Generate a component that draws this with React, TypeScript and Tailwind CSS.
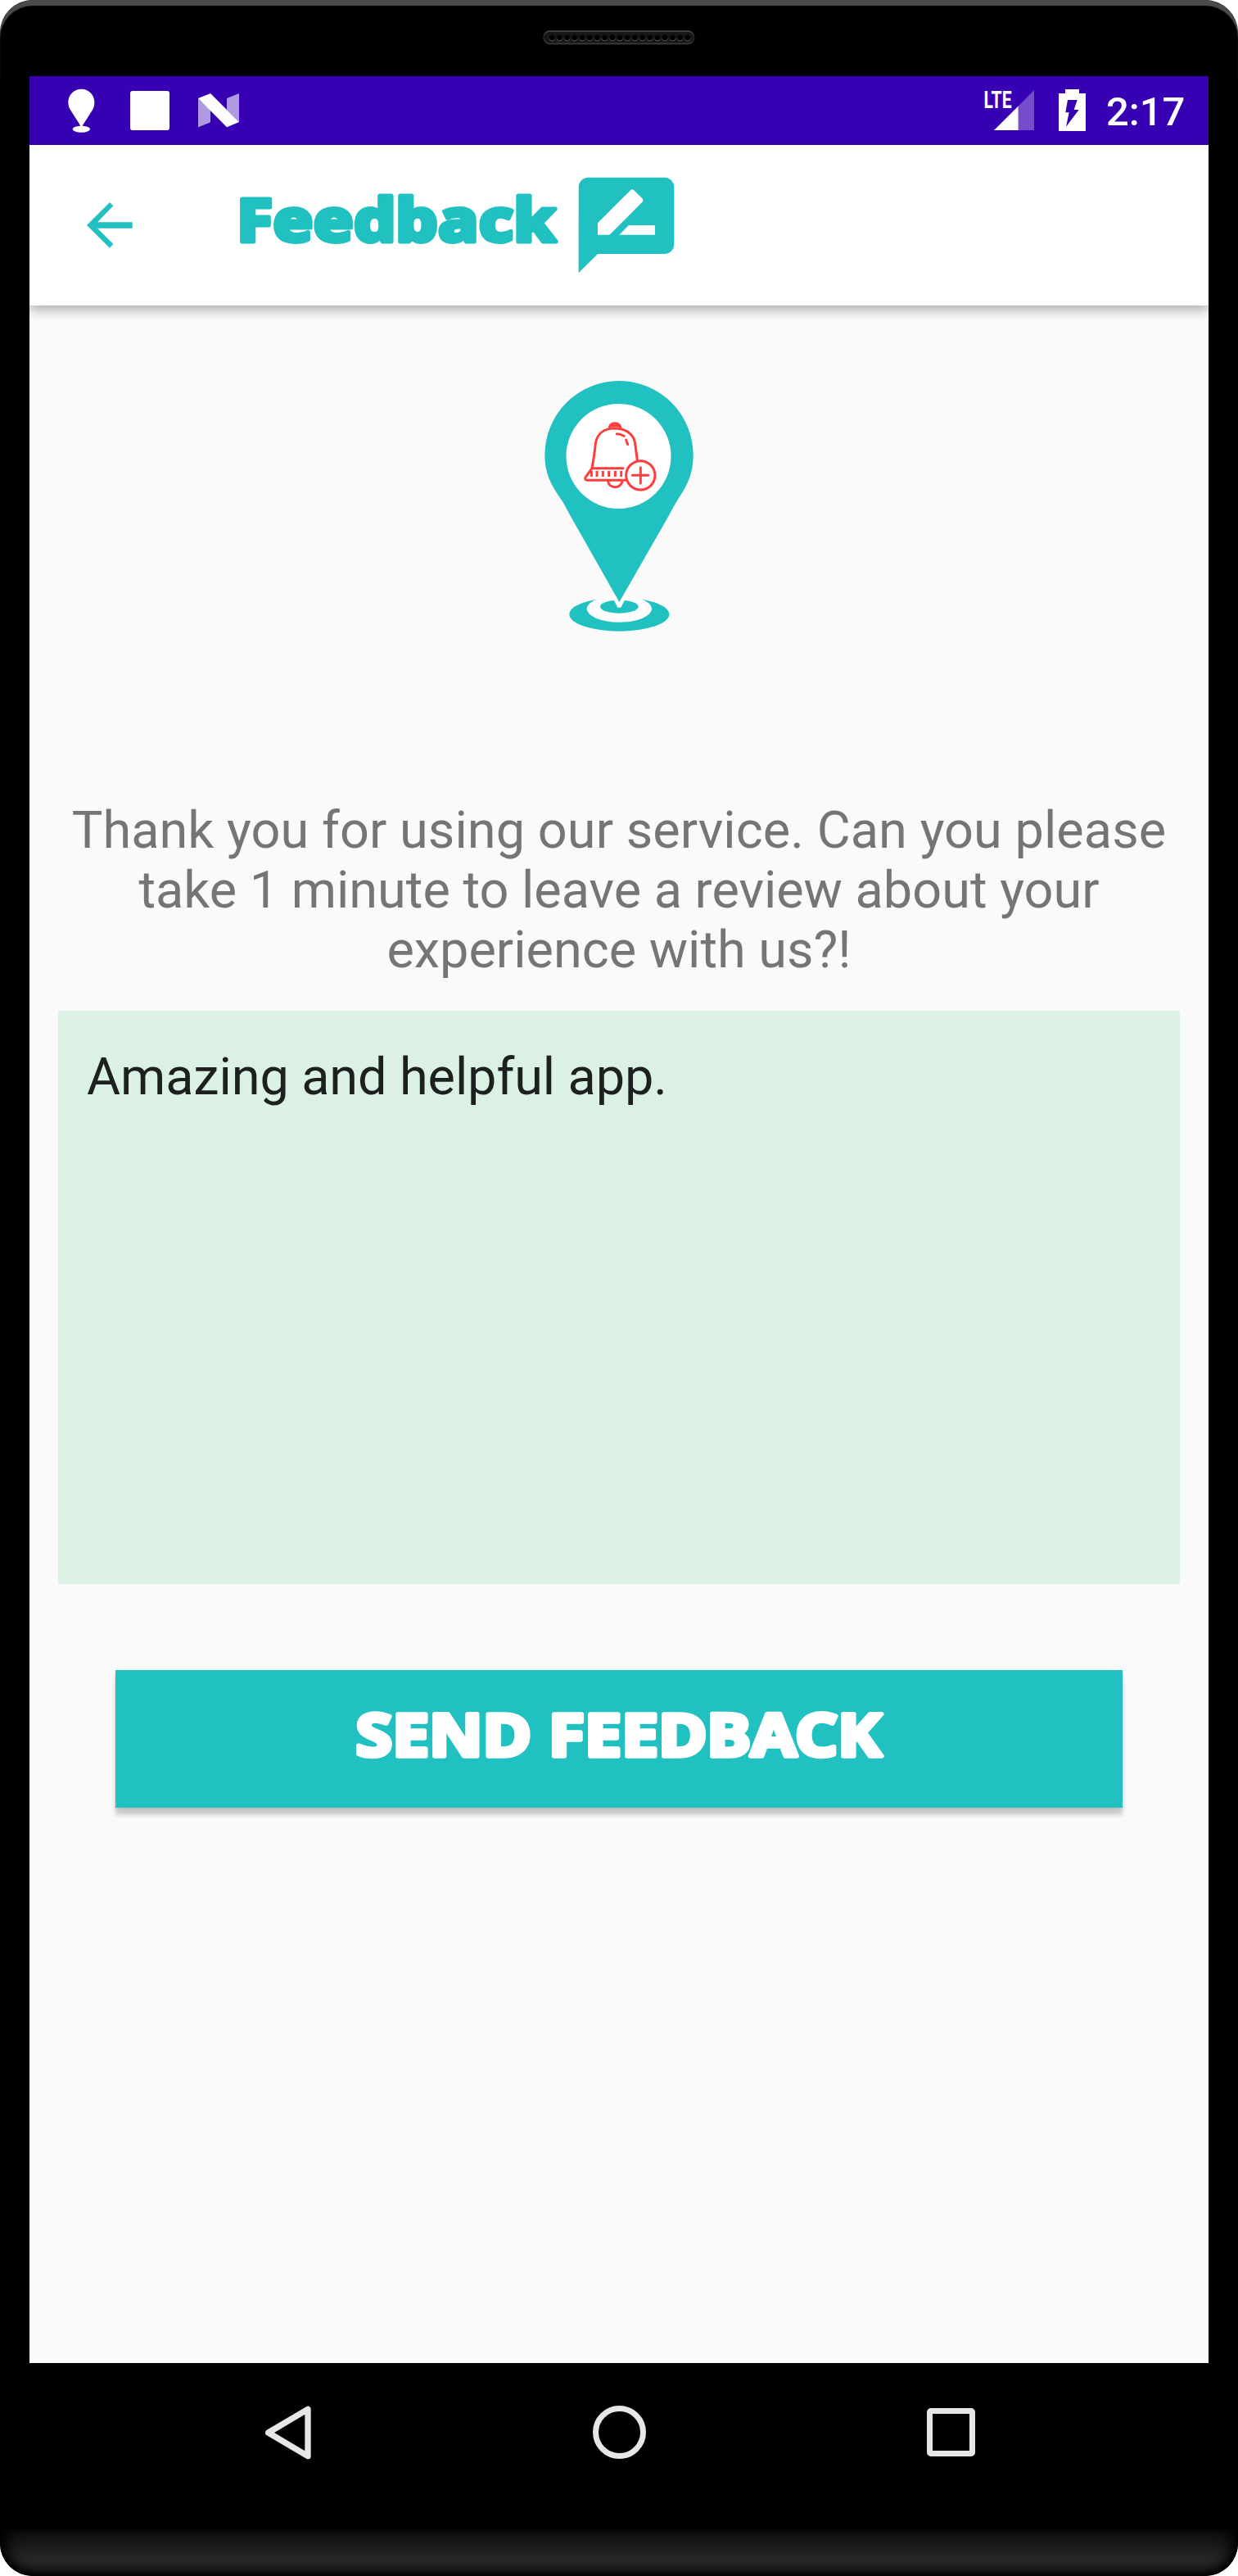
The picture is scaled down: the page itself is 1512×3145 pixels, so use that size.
import React from "react";

const TEAL = "#21c0c1";

function Speaker() {
  const holes = Array.from({ length: 19 }, (_, i) => 11.2 + i * 9.2);
  return (
    <svg width="186" height="18" viewBox="0 0 186 18" aria-hidden="true">
      <defs>
        <linearGradient id="rim" x1="0" y1="0" x2="0" y2="1">
          <stop offset="0" stopColor="#4c4c4c" />
          <stop offset="0.5" stopColor="#1c1c1c" />
          <stop offset="1" stopColor="#3c3c3c" />
        </linearGradient>
        <linearGradient id="hole" x1="0" y1="0" x2="0" y2="1">
          <stop offset="0.4" stopColor="#0c0c0c" />
          <stop offset="1" stopColor="#626262" />
        </linearGradient>
      </defs>
      <rect x="0.8" y="1" width="184" height="15.4" rx="7.7" fill="#171717" stroke="url(#rim)" strokeWidth="1.6" />
      {holes.map((x) => (
        <circle key={x} cx={x} cy="9.3" r="3.6" fill="#000" stroke="url(#hole)" strokeWidth="1" />
      ))}
    </svg>
  );
}

function StatusBar() {
  return (
    <div className="flex h-[84px] shrink-0 items-start justify-between bg-[#3700b3]">
      <div className="flex items-start">
        <svg className="ml-[46px] mt-[15px]" width="34" height="55" viewBox="246 324 102 165" fill="#fff">
          <path d="M298 326c-27 0-48 21-48 48 0 12 3 21 10 32l36 56-1 0h6l36-56c7-11 9-20 9-32 0-27-21-48-48-48Z" />
          <path d="M291 450h14l-5 14h-6z" />
          <ellipse cx="298" cy="473" rx="32" ry="12" />
        </svg>
        <div className="ml-[43px] mt-[18px] size-12 rounded-[3px] bg-white" />
        <svg className="ml-[35px] mt-[21px]" width="50" height="42" viewBox="726 343 150 126" fill="#fff">
          <path opacity="0.6" d="M726 361 771 404V449L726 467ZM831 361 876 343V448L831 403Z" />
          <path d="M726 361 771 343 876 448 831 467Z" />
        </svg>
      </div>
      <div className="flex items-start">
        <svg className="mt-[6px]" width="63" height="62" viewBox="0 -10 63 62" fill="#fff">
          <text
            x="0.500"
            y="23"
            textLength="34"
            lengthAdjust="spacingAndGlyphs"
            fontFamily="Roboto, sans-serif"
            fontWeight="700"
            fontSize="29.5"
          >
            LTE
          </text>
          <path opacity="0.3" d="M42.700 20.500 62 1V50H42.700Z" />
          <path d="M13 50 42.700 20.500V50Z" />
        </svg>
        <svg className="ml-[29px] mt-[16px]" width="33" height="51" viewBox="399 327 99 153">
          <path fill="#fff" d="M423 327h51v15h24v138h-99V342h24Z" />
          <path fill="#3700b3" d="M432 366h35l-12 36h18l-47 62 11-52h-13Z" />
        </svg>
        <span className="ml-[25px] mr-[27px] mt-[15px] block w-[98px] whitespace-nowrap font-['Roboto',sans-serif] text-[49px] font-medium leading-[57px] text-white">
          2:17
        </span>
      </div>
    </div>
  );
}

function AppBar() {
  return (
    <header className="relative flex h-[196px] shrink-0 items-start bg-white shadow-[0_5px_14px_rgba(0,0,0,0.33)]">
      <button type="button" aria-label="Back" className="ml-[70px] mt-[70px] h-14 w-14">
        <svg width="56" height="56" viewBox="319 741 168 168">
          <path fill={TEAL} d="M486 813.500H358L416 754 403 741 319 825 403 908 416 894 358 836H486Z" />
        </svg>
      </button>
      <h1 className="ml-[122px] mt-[28px]">
        <svg width="404" height="130" viewBox="0 0 404 130">
          <text
            x="5"
            y="89.500"
            textLength="390"
            lengthAdjust="spacingAndGlyphs"
            fontFamily="'Noto Sans', sans-serif"
            fontWeight="800"
            fontSize="74"
            fill={TEAL}
            stroke={TEAL}
            strokeWidth="5"
            strokeLinejoin="round"
          >
            Feedback
          </text>
        </svg>
      </h1>
      <svg className="ml-[7px] mt-[27.500px]" width="140" height="140" viewBox="0 0 24 24" fill={TEAL}>
        <path d="M20 2H4c-1.100 0-1.990.9-1.990 2L2 22l4-4h14c1.100 0 2-.9 2-2V4c0-1.100-.9-2-2-2zM6 14v-2.470l6.880-6.880c.2-.2.510-.2.710 0l1.770 1.770c.2.2.2.510 0 .710L8.470 14H6zm12 0h-7.500l2-2H18v2z" />
      </svg>
    </header>
  );
}

function PinLogo() {
  return (
    <svg className="mx-auto" width="184" height="308" viewBox="72 72 552 924">
      <ellipse cx="349" cy="930" rx="183" ry="62" fill={TEAL} />
      <path fill="#fafafa" d="M272 860H426L410 874H288Z" />
      <ellipse cx="349" cy="910" rx="119" ry="49" fill="#fdfdfd" />
      <ellipse cx="349" cy="902" rx="70" ry="24" fill={TEAL} />
      <path fill="#fdfdfd" d="M325 870 343 905H355L373 870Z" />
      <path
        fill={TEAL}
        d="M76 347A272 272 0 0 1 620 347C620 420 594 464 560 515 545 540 530 570 514 598L349 885 186 598C170 570 155 540 140 515 104 462 76 420 76 347Z"
      />
      <circle cx="346.500" cy="351" r="192" fill="#fff" />
      <g fill="none" stroke="#ff3d3d" strokeWidth="9" strokeLinecap="round">
        <path d="M313 249C314 235 322 230 333 230S352 235 354 249M322 240H345" />
        <path d="M249 392C257 355 260 325 262 305 267 267 294 249 333 249S403 270 407 305L415 366" />
        <path d="M249 395H363M247 398 225 429Q222 439 232 439H372" />
        <path d="M308 443C312 471 354 471 360 443" />
        <circle cx="427" cy="421" r="53" />
        <path d="M397 421H455M427 392V450" />
        <path d="M340 269Q354 269 366 277M374 291 380 308" />
        <path strokeLinecap="butt" d="M247 405V426M267 405V426M289 405V426M311 405V426M334 405V426M356 405V426" />
      </g>
    </svg>
  );
}

function NavBar() {
  return (
    <nav className="flex h-[168px] items-center bg-black">
      <svg className="ml-[322px] mt-[1px]" width="60" height="68" viewBox="966 287 180 204">
        <path
          fill="none"
          stroke="#e6e6e6"
          strokeWidth="22"
          strokeLinejoin="round"
          d="M1128 303V475L983 389Z"
        />
      </svg>
      <div className="ml-[342px] mt-[1px] size-[65px] rounded-full border-[7.500px] border-[#e6e6e6]" />
      <div className="ml-[343px] size-[59px] rounded-[5px] border-[7px] border-[#e6e6e6]" />
    </nav>
  );
}

export default function App() {
  return (
    <div className="w-[1512px] bg-white">
      <div className="flex h-[3145px] flex-col overflow-hidden rounded-[40px] bg-black">
        <div className="flex h-[93px] shrink-0 items-start justify-center rounded-t-[40px] pt-[37px] shadow-[inset_0_7px_1px_#4b4b4b]">
          <Speaker />
        </div>
        <div className="mx-[36px] flex h-[2792px] shrink-0 flex-col overflow-hidden bg-[#fafafa]">
          <StatusBar />
          <AppBar />
          <main className="flex flex-col pt-[91px]">
            <PinLogo />
            <p className="mt-[205px] text-center font-['Roboto',sans-serif] text-[63px] leading-[73px] text-[#757575]">
              <span className="tracking-[0.07px]">Thank you for using our service. Can you please</span>
              <br />
              take 1 minute to leave a review about your
              <br />
              experience with us?!
            </p>
            <div className="mx-[35px] mt-[38px] h-[700px] bg-[#daf1e4] px-[35px] pt-[44px] font-['Roboto',sans-serif] text-[63px] leading-[73px] tracking-[-0.1px] text-[#1e201f]">
              Amazing and helpful app.
            </div>
            <button
              type="button"
              className="mx-[105px] mt-[105px] flex h-[168px] items-center justify-center bg-[#21c0c1] shadow-[0_9px_5px_rgba(0,0,0,0.19),0_1px_3px_rgba(0,0,0,0.1)]"
            >
              <svg width="670" height="130" viewBox="0 0 670 130">
                <text
                  x="13.500"
                  y="85.500"
                  textLength="642"
                  lengthAdjust="spacingAndGlyphs"
                  fontFamily="'Noto Sans', sans-serif"
                  fontWeight="700"
                  fontSize="71"
                  fill="#fff"
                  stroke="#fff"
                  strokeWidth="5.5"
                  strokeLinejoin="round"
                >
                  SEND FEEDBACK
                </text>
              </svg>
            </button>
          </main>
        </div>
        <NavBar />
        <div className="mt-[34px] h-[58px] rounded-b-[40px] bg-linear-to-b from-[#0c0c0c] via-[#272727] via-65% to-[#1c1c1c] shadow-[inset_0_-3px_8px_#000,inset_14px_0_18px_-6px_#000,inset_-14px_0_18px_-6px_#000]" />
      </div>
    </div>
  );
}
